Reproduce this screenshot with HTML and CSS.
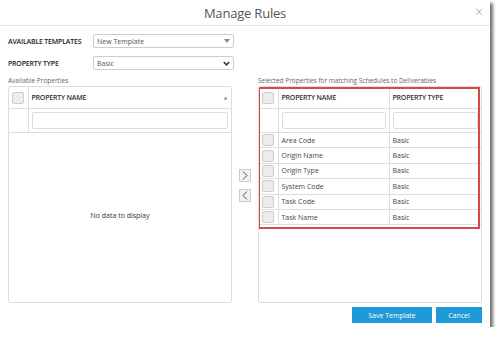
FILE: index.html
```html
<!DOCTYPE html>
<html lang="en">
<head>
  <meta charset="UTF-8" />
  <title>Manage Rules</title>
  <link rel="stylesheet" href="styles.css">
</head>
<body>

  <div class="dialog">
    <div class="dialog-header">
      <span class="dialog-title">Manage Rules</span>
      <span class="close-btn">&times;</span>
    </div>

    <div class="form-rows">
      <div class="form-row">
        <label>AVAILABLE TEMPLATES</label>
        <div class="select-box">
          <span>New Template</span>
          <svg width="6" height="4" viewBox="0 0 6 4"><path d="M0 0 L6 0 L3 4 Z" fill="#888"/></svg>
        </div>
      </div>
      <div class="form-row">
        <label>PROPERTY TYPE</label>
        <div class="select-box">
          <span>Basic</span>
          <svg width="7" height="5" viewBox="0 0 7 5"><path d="M0.8 1 L3.5 3.8 L6.2 1" fill="none" stroke="#333" stroke-width="1.6"/></svg>
        </div>
      </div>
    </div>

    <div class="panels">
      <div class="panel left-panel">
        <div class="panel-caption">Available Properties</div>
        <div class="grid">
          <table>
            <colgroup><col class="check-w"><col></colgroup>
            <tr class="head-row">
              <td class="check-col"><span class="checkbox"></span></td>
              <td class="name-head">PROPERTY NAME <span class="sort-arrow">&#9650;</span></td>
            </tr>
            <tr class="filter-row">
              <td class="check-col"></td>
              <td><div class="filter-input"></div></td>
            </tr>
          </table>
          <div class="no-data">No data to display</div>
        </div>
      </div>

      <div class="move-buttons">
        <span class="move-btn">
          <svg width="6" height="9" viewBox="0 0 6 9"><path d="M1 0.5 L5 4.5 L1 8.5" fill="none" stroke="#555" stroke-width="1"/></svg>
        </span>
        <span class="move-btn">
          <svg width="6" height="9" viewBox="0 0 6 9"><path d="M5 0.5 L1 4.5 L5 8.5" fill="none" stroke="#555" stroke-width="1"/></svg>
        </span>
      </div>

      <div class="panel right-panel">
        <div class="panel-caption">Selected Properties for matching Schedules to Deliverables</div>
        <div class="grid">
          <table class="selected-table">
            <colgroup><col class="check-w"><col class="name-w"><col></colgroup>
            <tr class="head-row">
              <td class="check-col"><span class="checkbox"></span></td>
              <td>PROPERTY NAME</td>
              <td>PROPERTY TYPE</td>
            </tr>
            <tr class="filter-row">
              <td class="check-col"></td>
              <td><div class="filter-input"></div></td>
              <td><div class="filter-input"></div></td>
            </tr>
            <tr class="data-row"><td class="check-col"><span class="checkbox"></span></td><td>Area Code</td><td>Basic</td></tr>
            <tr class="data-row"><td class="check-col"><span class="checkbox"></span></td><td>Origin Name</td><td>Basic</td></tr>
            <tr class="data-row"><td class="check-col"><span class="checkbox"></span></td><td>Origin Type</td><td>Basic</td></tr>
            <tr class="data-row"><td class="check-col"><span class="checkbox"></span></td><td>System Code</td><td>Basic</td></tr>
            <tr class="data-row"><td class="check-col"><span class="checkbox"></span></td><td>Task Code</td><td>Basic</td></tr>
            <tr class="data-row"><td class="check-col"><span class="checkbox"></span></td><td>Task Name</td><td>Basic</td></tr>
          </table>
          <div class="highlight-box"></div>
        </div>
      </div>
    </div>

    <div class="dialog-footer">
      <button class="btn">Save Template</button>
      <button class="btn">Cancel</button>
    </div>
  </div>

</body>
</html>
```

FILE: styles.css
```css
body {
  margin: 0;
  background: #fff;
  font-family: 'Open Sans', 'DejaVu Sans', sans-serif;
  color: #333;
}

.dialog {
  width: 490px;
  height: 327px;
  background: #fff;
  box-shadow: 3px 3px 3px rgba(0,0,0,0.55);
  position: relative;
}

.dialog-header {
  height: 25px;
  border-bottom: 1px solid #e4e4e4;
  display: flex;
  justify-content: center;
  align-items: center;
  position: relative;
}

.dialog-title {
  font-size: 13px;
  color: #555;
  letter-spacing: -0.2px;
}

.close-btn {
  position: absolute;
  right: 7px;
  top: 2px;
  font-size: 14px;
  color: #aaa;
  font-weight: 300;
}

.form-rows {
  padding: 8px 0 0 8px;
}

.form-row {
  display: flex;
  align-items: center;
  height: 14px;
  margin-bottom: 8px;
}

.form-row label {
  width: 85px;
  font-size: 7px;
  font-weight: 600;
  letter-spacing: -0.2px;
  color: #222;
}

.select-box {
  width: 133px;
  height: 12px;
  border: 1px solid #ccc;
  border-radius: 2px;
  padding: 0 3px;
  display: flex;
  align-items: center;
  justify-content: space-between;
  font-size: 7px;
  color: #555;
}

.panels {
  display: flex;
  padding: 0 0 0 8px;
  margin-top: -3px;
}

.panel-caption {
  font-size: 6.5px;
  color: #666;
  height: 11px;
  line-height: 11px;
  white-space: nowrap;
}

.left-panel {
  width: 224px;
}

.right-panel {
  width: 224px;
}

.grid {
  height: 215px;
  border: 1px solid #ddd;
  border-radius: 2px;
  position: relative;
  overflow: hidden;
}

table {
  border-collapse: collapse;
  table-layout: fixed;
  width: 100%;
  font-size: 7px;
}

.check-w {
  width: 19px;
}

.name-w {
  width: 111px;
}

td {
  padding: 0 0 0 3px;
  border: 1px solid #ddd;
  white-space: nowrap;
  overflow: hidden;
}

tr:first-child td {
  border-top: none;
}

td:first-child {
  border-left: none;
}

td:last-child {
  border-right: none;
}

.check-col {
  padding: 0;
  text-align: center;
}

.checkbox {
  display: inline-block;
  width: 10px;
  height: 10px;
  border: 1px solid #ccc;
  border-radius: 2px;
  background: #ececec;
  vertical-align: middle;
}

.head-row td {
  height: 21px;
  font-weight: 600;
  color: #333;
  letter-spacing: -0.2px;
}

.name-head {
  position: relative;
}

.sort-arrow {
  position: absolute;
  right: 4px;
  top: 8px;
  font-size: 4px;
  color: #777;
}

.filter-row td {
  height: 23px;
  padding: 0 3px;
}

.filter-input {
  height: 15px;
  border: 1px solid #ddd;
  border-radius: 2px;
  background: #fff;
}

.left-panel .filter-row td {
  border-bottom: 1px solid #ddd;
}

.no-data {
  text-align: center;
  font-size: 7px;
  color: #333;
  margin-top: 78px;
}

.move-buttons {
  width: 26px;
  display: flex;
  flex-direction: column;
  align-items: center;
  gap: 7px;
  padding-top: 94px;
}

.move-btn {
  width: 10px;
  height: 11px;
  border: 1px solid #ccc;
  background: #f2f2f2;
  display: flex;
  justify-content: center;
  align-items: center;
}

.data-row td {
  height: 14.4px;
  color: #444;
}

.highlight-box {
  position: absolute;
  left: -1px;
  top: 0;
  width: 218px;
  height: 138px;
  border: 2px solid #d94848;
}

.dialog-footer {
  display: flex;
  justify-content: flex-end;
  gap: 4px;
  padding: 4px 8px 0 0;
}

.btn {
  height: 16px;
  border: none;
  background: #1e9ad6;
  color: #fff;
  font-family: 'Open Sans', sans-serif;
  font-size: 7px;
  padding: 0;
}

.btn:first-child {
  width: 80px;
}

.btn:last-child {
  width: 46px;
}
```
